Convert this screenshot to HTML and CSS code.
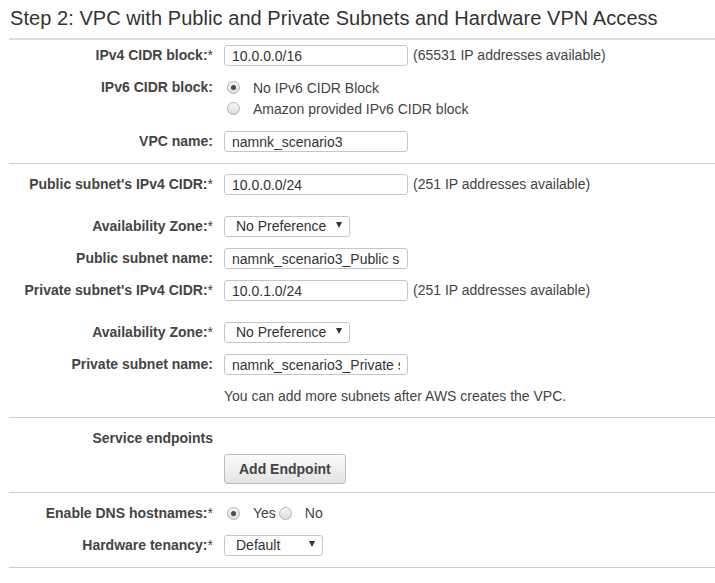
FILE: index.html
```html
<!DOCTYPE html>
<html lang="en">
<head>
<meta charset="utf-8">
<title>Step 2: VPC with Public and Private Subnets and Hardware VPN Access</title>
<link rel="stylesheet" href="styles.css">
</head>
<body>
<div class="page">
  <h1 class="title">Step 2: VPC with Public and Private Subnets and Hardware VPN Access</h1>

  <section class="sec sec-first">
    <div class="row">
      <label class="lbl">IPv4 CIDR block:<span class="req">*</span></label>
      <div class="field"><input class="txt" type="text" value="10.0.0.0/16"><span class="hint">(65531 IP addresses available)</span></div>
    </div>
    <div class="row row-top">
      <label class="lbl">IPv6 CIDR block:</label>
      <div class="radio-group">
        <div class="choice"><span class="radio checked"></span><span class="choice-text">No IPv6 CIDR Block</span></div>
        <div class="choice"><span class="radio"></span><span class="choice-text">Amazon provided IPv6 CIDR block</span></div>
      </div>
    </div>
    <div class="row row-vpc">
      <label class="lbl">VPC name:</label>
      <div class="field"><input class="txt" type="text" value="namnk_scenario3"></div>
    </div>
  </section>

  <section class="sec">
    <div class="row">
      <label class="lbl">Public subnet's IPv4 CIDR:<span class="req">*</span></label>
      <div class="field"><input class="txt" type="text" value="10.0.0.0/24"><span class="hint">(251 IP addresses available)</span></div>
    </div>
    <div class="row row-far">
      <label class="lbl">Availability Zone:<span class="req">*</span></label>
      <div class="field"><div class="sel sel-az"><span>No Preference</span><span class="caret"></span></div></div>
    </div>
    <div class="row">
      <label class="lbl">Public subnet name:</label>
      <div class="field"><input class="txt" type="text" value="namnk_scenario3_Public subnet"></div>
    </div>
    <div class="row">
      <label class="lbl">Private subnet's IPv4 CIDR:<span class="req">*</span></label>
      <div class="field"><input class="txt" type="text" value="10.0.1.0/24"><span class="hint">(251 IP addresses available)</span></div>
    </div>
    <div class="row row-far">
      <label class="lbl">Availability Zone:<span class="req">*</span></label>
      <div class="field"><div class="sel sel-az"><span>No Preference</span><span class="caret"></span></div></div>
    </div>
    <div class="row">
      <label class="lbl">Private subnet name:</label>
      <div class="field"><input class="txt" type="text" value="namnk_scenario3_Private subnet"></div>
    </div>
    <div class="row">
      <span class="lbl"></span>
      <div class="field"><span class="note">You can add more subnets after AWS creates the VPC.</span></div>
    </div>
  </section>

  <section class="sec sec-endpoints">
    <div class="row">
      <label class="lbl">Service endpoints</label>
      <div class="field"></div>
    </div>
    <div class="row">
      <span class="lbl"></span>
      <div class="field"><button class="btn" type="button">Add Endpoint</button></div>
    </div>
  </section>

  <section class="sec sec-last">
    <div class="row">
      <label class="lbl">Enable DNS hostnames:<span class="req">*</span></label>
      <div class="field">
        <div class="choice"><span class="radio checked"></span><span class="choice-text">Yes</span></div>
        <div class="choice choice-inline"><span class="radio"></span><span class="choice-text">No</span></div>
      </div>
    </div>
    <div class="row">
      <label class="lbl">Hardware tenancy:<span class="req">*</span></label>
      <div class="field"><div class="sel sel-ten"><span>Default</span><span class="caret"></span></div></div>
    </div>
  </section>
</div>
</body>
</html>
```

FILE: styles.css
```css
body {
  margin: 0;
  background: #ffffff;
  color: #444444;
  font-family: "Liberation Sans", Arial, sans-serif;
  font-size: 14px;
}

.page {
  padding-left: 9px;
}

.title {
  margin: 0;
  padding: 3px 0 5px 1px;
  font-size: 20px;
  line-height: 30px;
  font-weight: normal;
  letter-spacing: 0.06px;
  color: #333333;
  border-bottom: 2px solid #dddddd;
}

.sec {
  display: flex;
  flex-direction: column;
  gap: 11px;
  padding: 10px 0;
  border-bottom: 1px solid #cccccc;
}

.sec-first {
  padding: 5px 0 11px;
}

.sec-endpoints {
  gap: 5px;
  padding-bottom: 8px;
}

.sec-last {
  padding-bottom: 11px;
}

.row {
  display: grid;
  grid-template-columns: 204px auto;
  column-gap: 11px;
  align-items: center;
  min-height: 21px;
}

.row-top {
  align-items: start;
}

.row-vpc {
  margin-top: 1px;
}

.row-far {
  margin-top: 10px;
}

.lbl {
  text-align: right;
  font-weight: bold;
  font-size: 14px;
  line-height: 21px;
  color: #444444;
  white-space: nowrap;
}

.req {
  font-weight: normal;
}

.field {
  display: flex;
  align-items: center;
  gap: 5px;
  font-size: 14px;
  line-height: 21px;
}

.txt {
  box-sizing: border-box;
  width: 184px;
  height: 21px;
  margin: 0;
  padding: 0 7px;
  border: 1px solid #c6c6c6;
  border-radius: 3px;
  background: #ffffff;
  color: #333333;
  font-family: "Liberation Sans", Arial, sans-serif;
  font-size: 14px;
  outline: none;
}

.hint,
.note {
  color: #444444;
}

.radio-group {
  display: flex;
  flex-direction: column;
}

.choice {
  display: flex;
  align-items: center;
  height: 21px;
}

.choice-inline {
  margin-left: -5px;
}

.choice-text {
  margin-left: 13px;
  color: #444444;
}

.radio {
  box-sizing: border-box;
  width: 13px;
  height: 13px;
  margin-left: 3px;
  border: 1px solid #b3b3b3;
  border-radius: 50%;
  background: linear-gradient(#f6f6f6, #dcdcdc);
  display: flex;
  align-items: center;
  justify-content: center;
}

.radio.checked::after {
  content: "";
  width: 5px;
  height: 5px;
  border-radius: 50%;
  background: #4a4a4a;
}

.sel {
  box-sizing: border-box;
  display: flex;
  align-items: center;
  height: 21px;
  padding: 0 7px 0 11px;
  border: 1px solid #c6c6c6;
  border-radius: 3px;
  background: #ffffff;
  color: #333333;
  font-size: 14px;
}

.sel-az {
  width: 126px;
}

.sel-ten {
  width: 99px;
}

.caret {
  margin-left: auto;
  margin-top: -3px;
  width: 0;
  height: 0;
  border-left: 3px solid transparent;
  border-right: 3px solid transparent;
  border-top: 6px solid #333333;
}

.btn {
  box-sizing: border-box;
  height: 30px;
  margin: 0;
  padding: 0 14px;
  border: 1px solid #bdbdbd;
  border-radius: 3px;
  background: linear-gradient(#fbfbfb, #e3e3e3);
  color: #444444;
  font-family: "Liberation Sans", Arial, sans-serif;
  font-size: 14px;
  font-weight: bold;
}
```
